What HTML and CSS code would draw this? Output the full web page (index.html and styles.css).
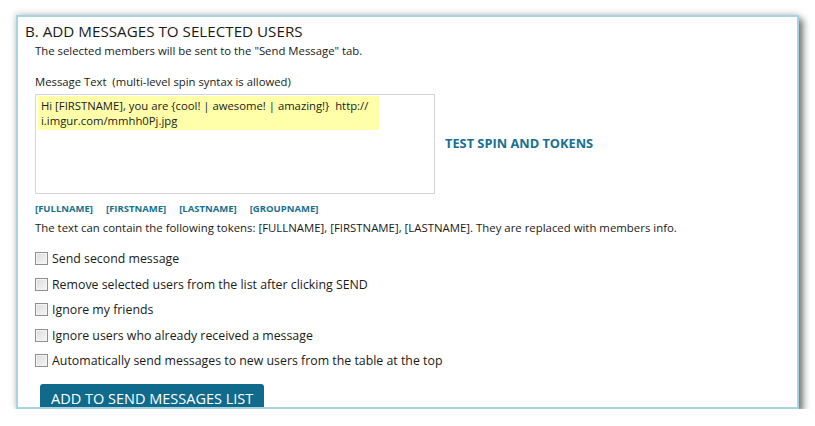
FILE: index.html
```html
<!DOCTYPE html>
<html>
<head>
<meta charset="utf-8">
<link rel="stylesheet" href="styles.css">
</head>
<body>
<div class="window">
  <h1 class="title">B. ADD MESSAGES TO SELECTED USERS</h1>
  <div class="content">
    <p class="intro">The selected members will be sent to the "Send Message" tab.</p>
    <div class="label">Message Text&nbsp; (multi-level spin syntax is allowed)</div>
    <div class="editor-row">
      <div class="textarea">
        <div class="highlight">Hi [FIRSTNAME], you are {cool! | awesome! | amazing!}&nbsp; http://<br>i.imgur.com/mmhh0Pj.jpg</div>
      </div>
      <a class="test-link">TEST SPIN AND TOKENS</a>
    </div>
    <div class="tokens">
      <a>[FULLNAME]</a><a>[FIRSTNAME]</a><a>[LASTNAME]</a><a>[GROUPNAME]</a>
    </div>
    <p class="note">The text can contain the following tokens: [FULLNAME], [FIRSTNAME], [LASTNAME]. They are replaced with members info.</p>
    <ul class="options">
      <li><span class="box"></span>Send second message</li>
      <li><span class="box"></span>Remove selected users from the list after clicking SEND</li>
      <li><span class="box"></span>Ignore my friends</li>
      <li><span class="box"></span>Ignore users who already received a message</li>
      <li><span class="box"></span>Automatically send messages to new users from the table at the top</li>
    </ul>
    <button class="add-btn">ADD TO SEND MESSAGES LIST</button>
  </div>
</div>
</body>
</html>
```

FILE: styles.css
```css
html, body {
  margin: 0;
  padding: 0;
  background: #ffffff;
}
body {
  font-family: "Open Sans", "Noto Sans", sans-serif;
  color: #1a1a1a;
}
.window {
  margin: 15px 0 0 16px;
  width: 779px;
  height: 390px;
  border: 2px solid #a6d4e2;
  background: #fff;
  box-shadow: 4px 4px 7px rgba(0,0,0,0.55), -1px -2px 6px rgba(0,0,0,0.14);
  overflow: hidden;
  box-sizing: content-box;
}
.title {
  margin: 0;
  padding: 4px 0 0 7px;
  font-size: 15.2px;
  font-weight: 400;
  line-height: 21px;
  color: #1a1a1a;
}
.content {
  padding-left: 17px;
}
.intro {
  margin: 0;
  font-size: 11.35px;
  line-height: 15px;
  padding-top: 1px;
}
.label {
  font-size: 11.3px;
  line-height: 15px;
  margin-top: 16px;
}
.editor-row {
  display: flex;
  align-items: center;
  margin-top: 5px;
}
.textarea {
  width: 396px;
  height: 97px;
  border: 1px solid #d6d6d6;
  padding: 1px 0 0 2px;
  box-sizing: content-box;
}
.highlight {
  width: 341px;
  background: #ffffaa;
  font-size: 11.3px;
  line-height: 15px;
  padding: 2px 0 2px 3px;
  box-sizing: border-box;
  height: 34px;
  white-space: nowrap;
}
.test-link {
  margin-left: 10px;
  margin-bottom: 2px;
  font-size: 12.8px;
  font-weight: 700;
  color: #17708f;
}
.tokens {
  display: flex;
  gap: 13px;
  margin-top: 9px;
  font-size: 9.5px;
  font-weight: 700;
  line-height: 12px;
  color: #17708f;
}
.note {
  margin: 0;
  padding-top: 5px;
  font-size: 11.4px;
  line-height: 15px;
}
.options {
  list-style: none;
  margin: 15px 0 0;
  padding: 0;
}
.options li {
  display: flex;
  align-items: center;
  height: 17px;
  margin-bottom: 8.6px;
  font-size: 12.35px;
}
.box {
  width: 11px;
  height: 11px;
  border: 1px solid #8e8f8f;
  background: linear-gradient(135deg, #dcdcdc, #f6f6f6);
  box-shadow: inset 0 0 0 1px #f4f4f4;
  margin-right: 4px;
  flex: none;
}
.add-btn {
  margin: 15px 0 0 5px;
  border: none;
  border-radius: 3px 3px 0 0;
  background: #0f6a8b;
  color: #fff;
  font-family: inherit;
  font-size: 14.5px;
  padding: 3px 11px 4px;
  height: 30px;
  line-height: 20px;
  display: block;
}
```
